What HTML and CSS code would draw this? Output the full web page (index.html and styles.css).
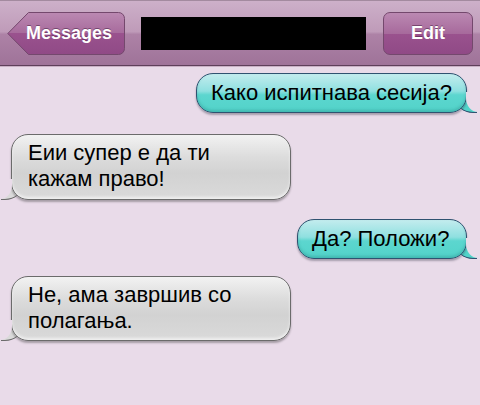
FILE: index.html
```html
<!DOCTYPE html>
<html lang="mk">
<head>
<meta charset="utf-8">
<title>Messages</title>
<link rel="stylesheet" href="styles.css">
</head>
<body>
<header class="navbar">
  <div class="back-btn">
    <svg class="back-shape" width="118" height="43" viewBox="0 0 118 43">
      <defs>
        <linearGradient id="bg" x1="0" y1="0" x2="0" y2="1">
          <stop offset="0" stop-color="#bb89b2"/>
          <stop offset="0.5" stop-color="#a76a9c"/>
          <stop offset="0.5" stop-color="#9a528e"/>
          <stop offset="1" stop-color="#904a86"/>
        </linearGradient>
      </defs>
      <path d="M21.5 0.5 H111.5 A6 6 0 0 1 117.5 6.5 V36.5 A6 6 0 0 1 111.5 42.5 H21.5 L0.8 21.5 Z" fill="url(#bg)" stroke="#74486d" stroke-width="1"/>
    </svg>
    <span class="btn-label">Messages</span>
  </div>
  <div class="title-redacted"></div>
  <div class="edit-btn"><span class="btn-label">Edit</span></div>
</header>
<main class="chat">
  <div class="bubble out b1">Како испитнава сесија?</div>
  <div class="bubble in b2">Еии супер е да ти<br>кажам право!</div>
  <div class="bubble out b3">Да? Положи?</div>
  <div class="bubble in b4">Не, ама завршив со<br>полагања.</div>
</main>
</body>
</html>
```
FILE: styles.css
```css
html, body {
  margin: 0;
  padding: 0;
}
body {
  width: 480px;
  height: 405px;
  overflow: hidden;
  background: #e9dbe9;
  font-family: "Liberation Sans", Arial, sans-serif;
}
.navbar {
  display: flex;
  align-items: center;
  height: 66px;
  padding: 0 7px;
  box-sizing: border-box;
  background: linear-gradient(#cdb0c9 0%, #bf9bb9 48%, #ad82a6 52%, #9f7399 100%);
  border-top: 1px solid #a38a9f;
  border-bottom: 1px solid #5e3f5a;
  box-shadow: 0 1px 0 #c9b0c5;
}
.back-btn {
  position: relative;
  width: 118px;
  height: 43px;
  display: flex;
  align-items: center;
  justify-content: flex-end;
  padding-right: 13px;
  box-sizing: border-box;
}
.back-shape {
  position: absolute;
  left: 0;
  top: 0;
}
.btn-label {
  position: relative;
  color: #fff;
  font-weight: bold;
  font-size: 18px;
  text-shadow: 0 -1px 0 rgba(70, 30, 65, 0.55);
}
.title-redacted {
  width: 225px;
  height: 33px;
  margin-left: 16px;
  background: #000;
}
.edit-btn {
  margin-left: auto;
  width: 90px;
  height: 43px;
  box-sizing: border-box;
  border: 1px solid #74486d;
  border-radius: 7px;
  display: flex;
  align-items: center;
  justify-content: center;
  background: linear-gradient(#bb89b2 0%, #a76a9c 50%, #9a528e 50%, #904a86 100%);
}
.chat {
  display: flex;
  flex-direction: column;
  padding: 7px 13px 0 11px;
}
.bubble {
  position: relative;
  font-size: 22px;
  line-height: 26px;
  color: #000;
  white-space: nowrap;
  box-sizing: border-box;
  border-radius: 17px;
}
.bubble.out {
  align-self: flex-end;
  padding: 6px 14px 6px 14px;
  border: 1px solid #2f5270;
  background: linear-gradient(#c3ecee 0%, #8fe0e0 45%, #5cd6cf 55%, #52d3c9 100%);
  box-shadow: 0 2px 2px rgba(40, 40, 60, 0.35), inset 0 -2px 3px rgba(30, 120, 120, 0.3);
}
.bubble.out::after {
  content: "";
  position: absolute;
  right: -11px;
  bottom: -1px;
  width: 22px;
  height: 18px;
  background: #52d3c9;
  border-bottom: 1px solid #2f5270;
  border-bottom-left-radius: 18px 16px;
  z-index: -1;
}
.bubble.out::before {
  content: "";
  position: absolute;
  right: -14px;
  bottom: 0;
  width: 14px;
  height: 20px;
  background: #e9dbe9;
  border-bottom-left-radius: 12px 14px;
}
.bubble.in {
  align-self: flex-start;
  padding: 5px 16px 7px 16px;
  width: 280px;
  border: 1px solid #6b6b6b;
  background: linear-gradient(#f2f2f2 0%, #dcdcdc 35%, #d2d2d2 60%, #dadada 100%);
  box-shadow: 0 2px 2px rgba(40, 40, 40, 0.35), inset 0 -2px 3px rgba(255, 255, 255, 0.6);
}
.bubble.in::after {
  content: "";
  position: absolute;
  left: -11px;
  bottom: -1px;
  width: 22px;
  height: 18px;
  background: #dadada;
  border-bottom: 1px solid #6b6b6b;
  border-bottom-right-radius: 18px 16px;
  z-index: -1;
}
.bubble.in::before {
  content: "";
  position: absolute;
  left: -14px;
  bottom: 0;
  width: 14px;
  height: 20px;
  background: #e9dbe9;
  border-bottom-right-radius: 12px 14px;
}
.b1 { width: 271px; }
.b2 { margin-top: 21px; }
.b3 { margin-top: 19px; width: 170px; height: 40px; padding-left: 15px; }
.b4 { margin-top: 17px; height: 65px; }
```
